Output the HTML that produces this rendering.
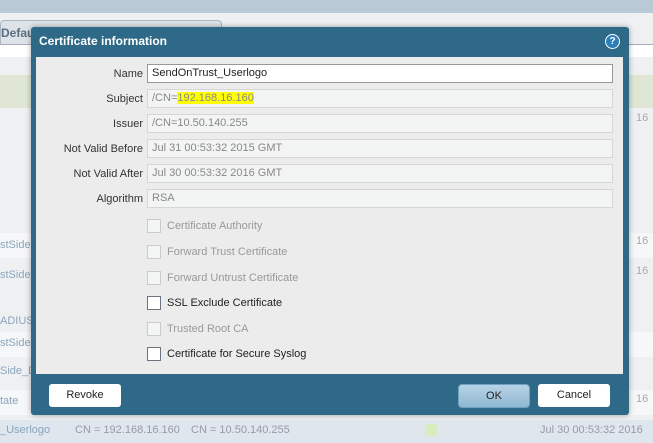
<!DOCTYPE html><html><head><style>
body{margin:0;width:653px;height:443px;overflow:hidden;background:#eef0f2;font-family:"Liberation Sans",sans-serif;font-size:11px;position:relative}
.a{position:absolute}
.lbl{position:absolute;right:510px;width:120px;text-align:right;color:#333}
.inp{position:absolute;left:147px;width:460px;height:17px;border:1px solid #d6d6d6;background:#f3f4f4;color:#888;line-height:17px;padding-left:4px;box-sizing:content-box}
.cb{position:absolute;left:147px;width:12px;height:12px;border:1px solid #c8cccf;background:#f4f5f5}
.cbt{position:absolute;left:167px;color:#999}
.row{position:absolute;left:0;width:653px;height:25px;color:#8aa6c0;font-size:11px}
</style></head><body>
<div class="a" style="left:0;top:0;width:653px;height:13px;background:#b9c9d6"></div>
<div class="a" style="left:0;top:20px;width:220px;height:24px;background:#dde3e8;border:1px solid #aab8c4;border-radius:4px 4px 0 0;color:#5a6e80;font-weight:bold;line-height:24px;font-size:12px">Defau</div>
<div class="a" style="left:0;top:44px;width:653px;height:12px;background:#fff;border-top:1px solid #aab"></div>
<div class="a" style="left:0;top:75px;width:653px;height:33px;background:#dfe6d4"></div>
<div class="row" style="top:233px;background:#f6f7f8"><span class="a" style="left:0;top:6px">stSide</span></div>
<div class="row" style="top:263px"><span class="a" style="left:0;top:6px">stSide</span></div>
<div class="row" style="top:310px"><span class="a" style="left:0;top:5px">ADIUS</span></div>
<div class="row" style="top:332px;background:#f6f7f8"><span class="a" style="left:0;top:5px">stSide</span></div>
<div class="row" style="top:360px"><span class="a" style="left:0;top:5px">Side_D</span></div>
<div class="row" style="top:390px;background:#f6f7f8"><span class="a" style="left:0;top:5px">tate</span></div>
<div class="row" style="top:420px;background:#dfe6ee;height:23px"><span class="a" style="left:0;top:4px">_Userlogo</span><span class="a" style="left:75px;top:4px;color:#99a">CN = 192.168.16.160</span><span class="a" style="left:191px;top:4px;color:#99a">CN = 10.50.140.255</span><span class="a" style="left:540px;top:4px;color:#99a">Jul 30 00:53:32 2016</span><span class="a" style="left:425px;top:4px;width:12px;height:12px;background:#d8ecc0"></span></div>
<span class="a" style="left:636px;top:112px;color:#aaa">16</span>
<span class="a" style="left:636px;top:235px;color:#aaa">16</span>
<span class="a" style="left:636px;top:265px;color:#aaa">16</span>
<span class="a" style="left:636px;top:393px;color:#aaa">16</span>
<div class="a" style="left:31px;top:27px;width:598px;height:388px;background:#2e6a87;border-radius:3px;box-shadow:0 0 6px rgba(0,0,0,.35)"></div>
<div class="a" style="left:39px;top:34px;color:#fff;font-weight:bold;font-size:12px">Certificate information</div>
<div class="a" style="left:605px;top:34px;width:13px;height:13px;border-radius:50%;background:#2c7fb8;border:1px solid #fff;color:#fff;font-weight:bold;font-size:10px;text-align:center;line-height:13px">?</div>
<div class="a" style="left:36px;top:57px;width:587px;height:317px;background:#ececec"></div>
<div class="lbl" style="top:68px">Name</div>
<div class="inp" style="top:64px;background:#fff;border-color:#999;color:#222">SendOnTrust_Userlogo</div>
<div class="lbl" style="top:93px">Subject</div>
<div class="inp" style="top:89px">/CN=<span style="background:#ffff00;color:#888">192.168.16.160</span></div>
<div class="lbl" style="top:118px">Issuer</div>
<div class="inp" style="top:114px">/CN=10.50.140.255</div>
<div class="lbl" style="top:143px">Not Valid Before</div>
<div class="inp" style="top:139px">Jul 31 00:53:32 2015 GMT</div>
<div class="lbl" style="top:168px">Not Valid After</div>
<div class="inp" style="top:164px">Jul 30 00:53:32 2016 GMT</div>
<div class="lbl" style="top:193px">Algorithm</div>
<div class="inp" style="top:189px">RSA</div>
<div class="cb" style="top:219px"></div><div class="cbt" style="top:220px">Certificate Authority</div>
<div class="cb" style="top:245px"></div><div class="cbt" style="top:246px">Forward Trust Certificate</div>
<div class="cb" style="top:271px"></div><div class="cbt" style="top:272px">Forward Untrust Certificate</div>
<div class="cb" style="top:296px;background:#fff;border-color:#6a7580"></div><div class="cbt" style="top:297px;color:#222">SSL Exclude Certificate</div>
<div class="cb" style="top:322px"></div><div class="cbt" style="top:323px">Trusted Root CA</div>
<div class="cb" style="top:347px;background:#fff;border-color:#6a7580"></div><div class="cbt" style="top:348px;color:#222">Certificate for Secure Syslog</div>
<div class="a" style="left:49px;top:384px;width:72px;height:23px;background:#fff;border-radius:3px;text-align:center;line-height:23px;color:#222">Revoke</div>
<div class="a" style="left:458px;top:384px;width:70px;height:22px;background:linear-gradient(#b9d3e5,#8fb7d2);border:1px solid #6fa1c4;border-radius:4px;text-align:center;line-height:22px;color:#222">OK</div>
<div class="a" style="left:538px;top:384px;width:72px;height:23px;background:#fff;border-radius:3px;text-align:center;line-height:23px;color:#222">Cancel</div>
</body></html>
